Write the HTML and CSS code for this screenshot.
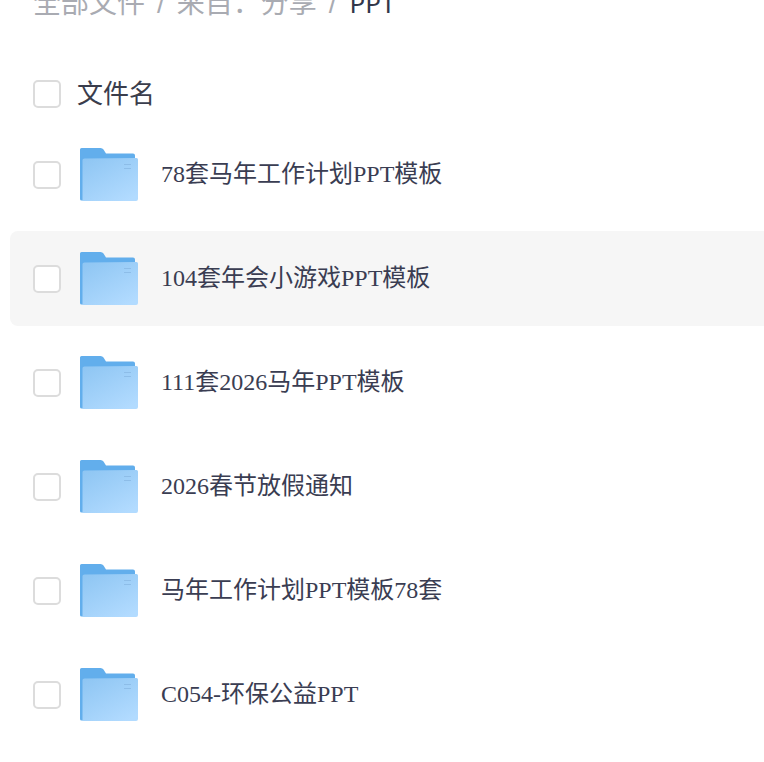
FILE: index.html
```html
<!DOCTYPE html>
<html lang="zh">
<head>
    <meta charset="UTF-8">
    <meta name="viewport" content="width=device-width, initial-scale=1.0">
    <title>全部文件</title>
    <link rel="stylesheet" href="styles.css">
</head>
<body>
    <svg class="defs" width="0" height="0" aria-hidden="true">
        <defs>
            <linearGradient id="folderFront" x1="0.1" y1="0" x2="0.8" y2="1">
                <stop offset="0" stop-color="#8fc6f3"/>
                <stop offset="1" stop-color="#b2dbff"/>
            </linearGradient>
            <symbol id="folder" viewBox="0 0 58 54">
                <path d="M1.5 0H20.500Q22.500 0 23.500 1.500L26 5.500H53Q55 5.500 55 7.500V12H3V52.500H1.500Q0 52.500 0 51V1.500Q0 0 1.500 0Z" fill="#62aeec"/>
                <path d="M2.500 52.500V12Q2.500 10.500 4.500 10.500L56.500 10Q58 10 58 11.500V51Q58 53 56 53H2.500Z" fill="url(#folderFront)"/>
                <path d="M44 16.500H51M44 20.500H51" stroke="#8dbde8" stroke-width="1"/>
            </symbol>
        </defs>
    </svg>

    <div class="crumbs">
        <span>全部文件</span><i>/</i><span>来自：分享</span><i>/</i><b>PPT</b>
    </div>

    <div class="head">
        <span class="check"></span>
        <span class="head-name">文件名</span>
    </div>

    <ul class="files">
        <li class="file">
            <span class="check"></span>
            <svg class="folder"><use href="#folder"/></svg>
            <span class="name">78套马年工作计划PPT模板</span>
        </li>
        <li class="file active">
            <span class="check"></span>
            <svg class="folder"><use href="#folder"/></svg>
            <span class="name">104套年会小游戏PPT模板</span>
        </li>
        <li class="file">
            <span class="check"></span>
            <svg class="folder"><use href="#folder"/></svg>
            <span class="name">111套2026马年PPT模板</span>
        </li>
        <li class="file">
            <span class="check"></span>
            <svg class="folder"><use href="#folder"/></svg>
            <span class="name">2026春节放假通知</span>
        </li>
        <li class="file">
            <span class="check"></span>
            <svg class="folder"><use href="#folder"/></svg>
            <span class="name">马年工作计划PPT模板78套</span>
        </li>
        <li class="file">
            <span class="check"></span>
            <svg class="folder"><use href="#folder"/></svg>
            <span class="name">C054-环保公益PPT</span>
        </li>
    </ul>
</body>
</html>
```

FILE: styles.css
```css
html, body {
    height: 100%;
    overflow: hidden;
}
body {
    margin: 0;
    background-color: #fff;
    font-family: "Liberation Sans", "Noto Sans CJK SC", sans-serif;
}
.defs {
    position: absolute;
}
.crumbs {
    display: flex;
    align-items: baseline;
    height: 40px;
    margin-top: -19px;
    padding-left: 33px;
    font-size: 28px;
    color: #a9abb2;
}
.crumbs i {
    font-style: normal;
    margin: 0 12px;
}
.crumbs b {
    font-family: "Noto Sans", sans-serif;
    font-size: 26px;
    font-weight: normal;
    margin-left: 1px;
    color: #32374a;
}
.head {
    display: flex;
    align-items: center;
    height: 40px;
    margin-top: 53px;
    padding-left: 33px;
}
.head-name {
    margin-left: 16px;
    margin-bottom: 6px;
    font-size: 26px;
    color: #3a3d4c;
}
.check {
    flex: none;
    width: 28px;
    height: 28px;
    box-sizing: border-box;
    background-color: #fff;
    border: 2px solid #dcdcdc;
    border-radius: 5px;
}
.files {
    list-style: none;
    margin: 13px 0 0 10px;
    padding: 0;
}
.file {
    display: flex;
    align-items: center;
    height: 95px;
    margin-bottom: 9px;
    padding-left: 23px;
    border-radius: 8px 0 0 8px;
}
.file.active {
    background-color: #f6f6f6;
}
.folder {
    flex: none;
    width: 58px;
    height: 54px;
    margin-left: 19px;
}
.name {
    margin-left: 23px;
    margin-bottom: 6px;
    font-family: "Liberation Serif", "Noto Sans CJK SC", serif;
    font-size: 24px;
    color: #3a3d52;
}
```
